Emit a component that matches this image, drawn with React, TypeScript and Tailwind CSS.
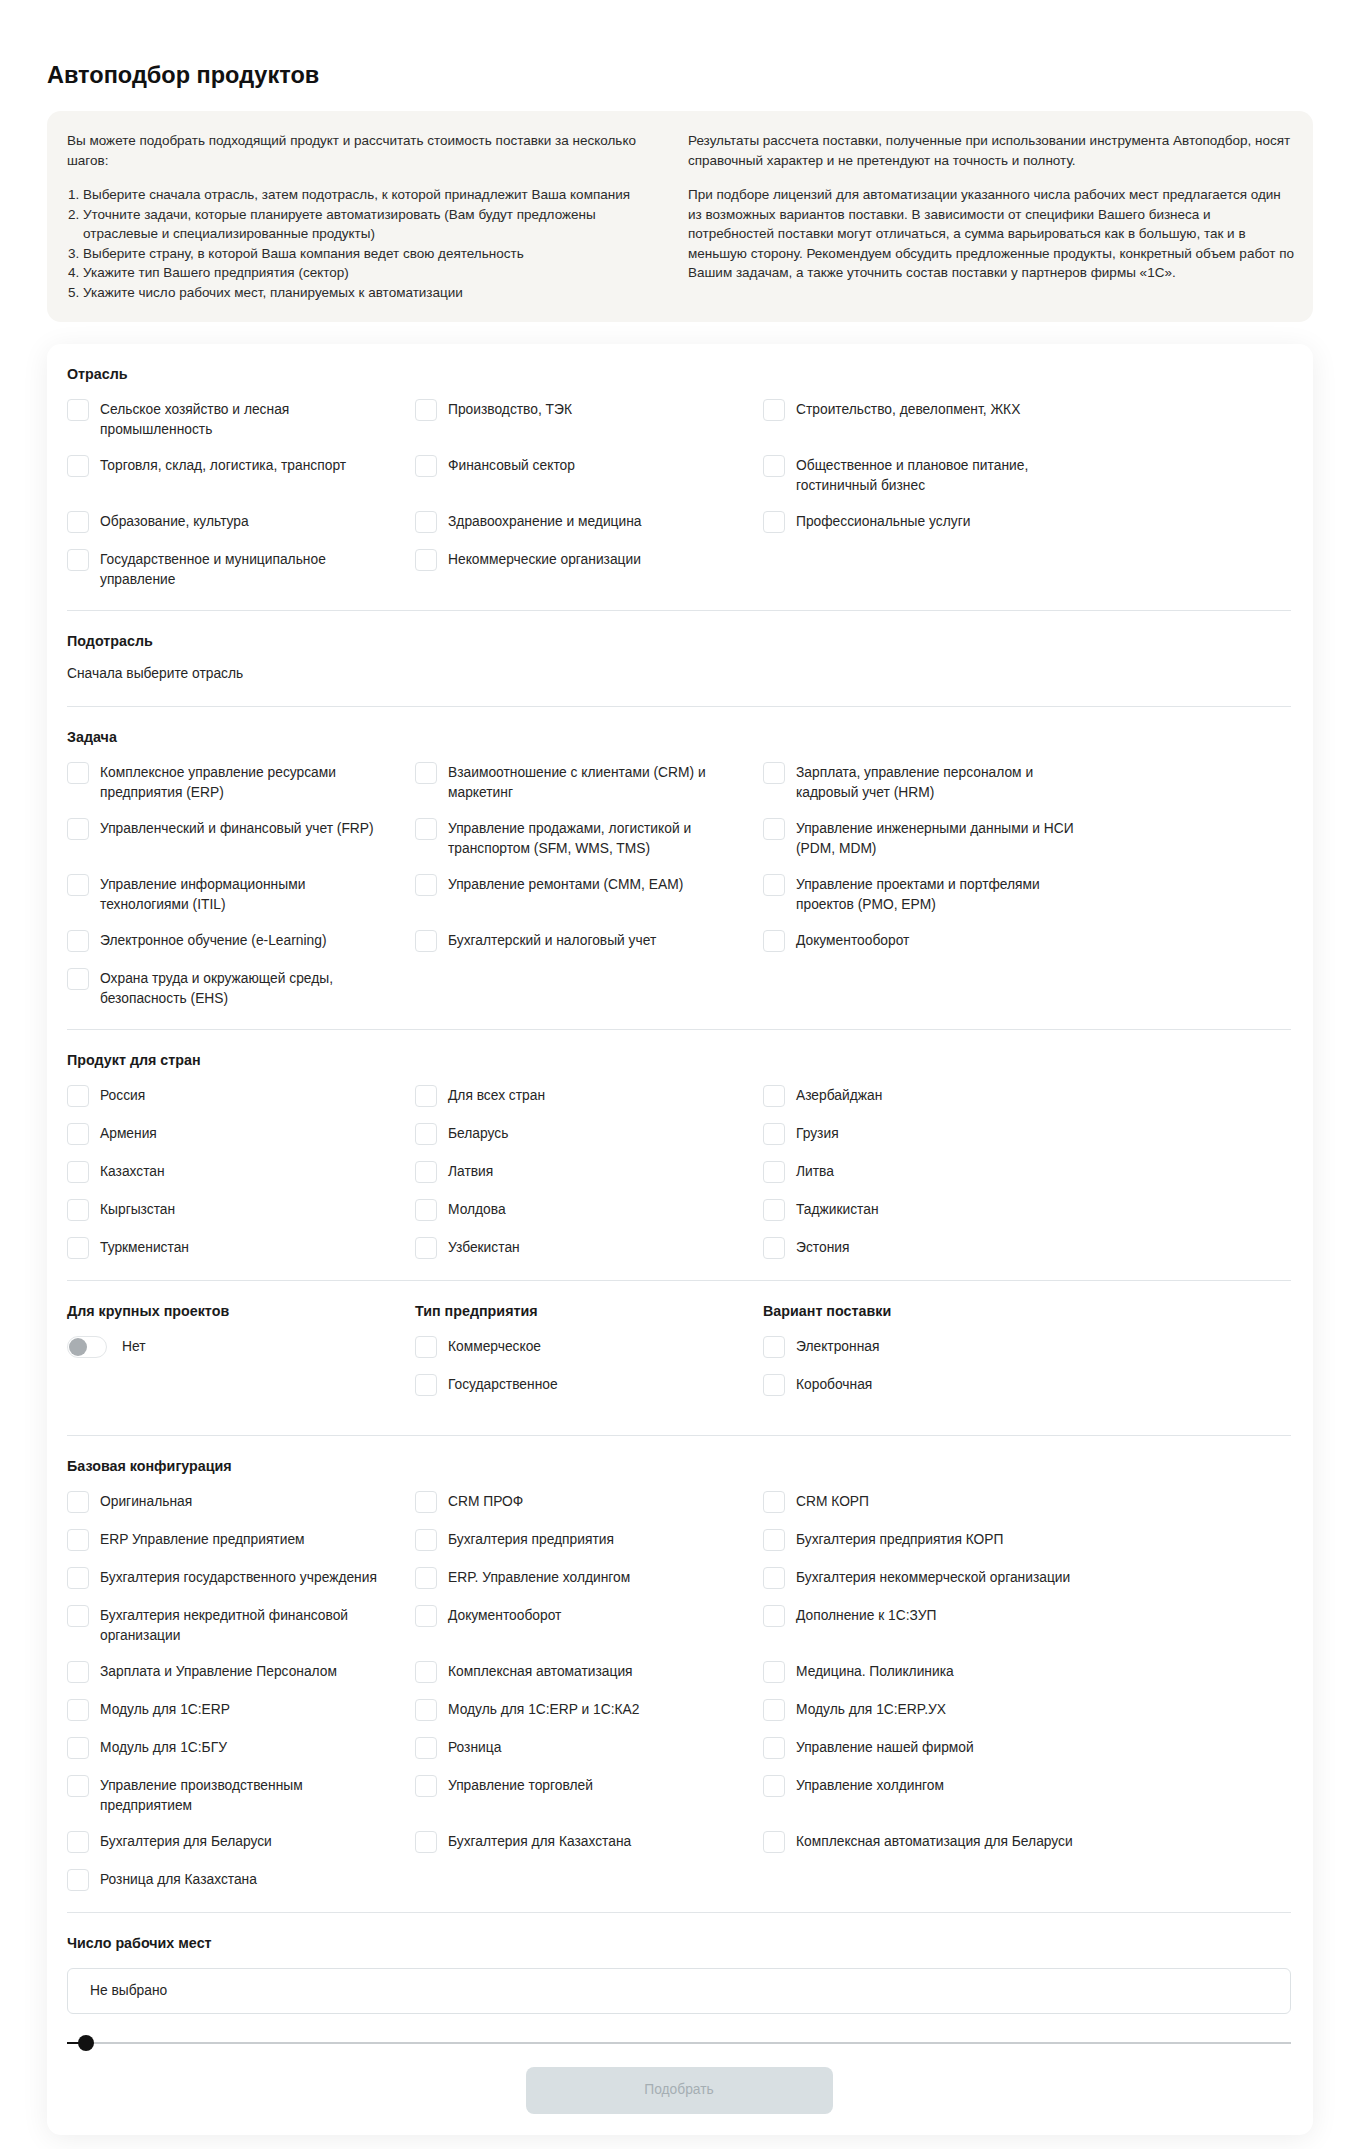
import { useState } from 'react';

const industries = [
  'Сельское хозяйство и лесная\nпромышленность',
  'Производство, ТЭК',
  'Строительство, девелопмент, ЖКХ',
  'Торговля, склад, логистика, транспорт',
  'Финансовый сектор',
  'Общественное и плановое питание,\nгостиничный бизнес',
  'Образование, культура',
  'Здравоохранение и медицина',
  'Профессиональные услуги',
  'Государственное и муниципальное\nуправление',
  'Некоммерческие организации',
];

const tasks = [
  'Комплексное управление ресурсами\nпредприятия (ERP)',
  'Взаимоотношение с клиентами (CRM) и\nмаркетинг',
  'Зарплата, управление персоналом и\nкадровый учет (HRM)',
  'Управленческий и финансовый учет (FRP)',
  'Управление продажами, логистикой и\nтранспортом (SFM, WMS, TMS)',
  'Управление инженерными данными и НСИ\n(PDM, MDM)',
  'Управление информационными\nтехнологиями (ITIL)',
  'Управление ремонтами (CMM, EAM)',
  'Управление проектами и портфелями\nпроектов (PMO, EPM)',
  'Электронное обучение (e-Learning)',
  'Бухгалтерский и налоговый учет',
  'Документооборот',
  'Охрана труда и окружающей среды,\nбезопасность (EHS)',
];

const countries = [
  'Россия', 'Для всех стран', 'Азербайджан',
  'Армения', 'Беларусь', 'Грузия',
  'Казахстан', 'Латвия', 'Литва',
  'Кыргызстан', 'Молдова', 'Таджикистан',
  'Туркменистан', 'Узбекистан', 'Эстония',
];

const configs = [
  'Оригинальная', 'CRM ПРОФ', 'CRM КОРП',
  'ERP Управление предприятием', 'Бухгалтерия предприятия', 'Бухгалтерия предприятия КОРП',
  'Бухгалтерия государственного учреждения', 'ERP. Управление холдингом', 'Бухгалтерия некоммерческой организации',
  'Бухгалтерия некредитной финансовой\nорганизации', 'Документооборот', 'Дополнение к 1С:ЗУП',
  'Зарплата и Управление Персоналом', 'Комплексная автоматизация', 'Медицина. Поликлиника',
  'Модуль для 1С:ERP', 'Модуль для 1С:ERP и 1С:КА2', 'Модуль для 1С:ERP.УХ',
  'Модуль для 1С:БГУ', 'Розница', 'Управление нашей фирмой',
  'Управление производственным\nпредприятием', 'Управление торговлей', 'Управление холдингом',
  'Бухгалтерия для Беларуси', 'Бухгалтерия для Казахстана', 'Комплексная автоматизация для Беларуси',
  'Розница для Казахстана',
];

const steps = [
  'Выберите сначала отрасль, затем подотрасль, к которой принадлежит Ваша компания',
  'Уточните задачи, которые планируете автоматизировать (Вам будут предложены\nотраслевые и специализированные продукты)',
  'Выберите страну, в которой Ваша компания ведет свою деятельность',
  'Укажите тип Вашего предприятия (сектор)',
  'Укажите число рабочих мест, планируемых к автоматизации',
];

const Option = ({ label }: { label: string }) => {
  const [checked, setChecked] = useState(false);
  return (
    <label className="flex items-start gap-[11px] cursor-pointer">
      <span
        onClick={() => setChecked(!checked)}
        className={`w-[22px] h-[22px] shrink-0 rounded-[4px] border ${
          checked ? 'bg-[#1f1f1f] border-[#1f1f1f]' : 'bg-white border-[#dfe3e6]'
        }`}
      />
      <span className="pt-px text-[13.8px] leading-[19.5px] text-[#262626] whitespace-pre-line">{label}</span>
    </label>
  );
};

const OptionGrid = ({ items }: { items: string[] }) => (
  <div className="grid grid-cols-[repeat(3,348px)] gap-y-4">
    {items.map((item) => (
      <Option key={item} label={item} />
    ))}
  </div>
);

const Heading = ({ children }: { children: string }) => (
  <h3 className="text-[14.3px] leading-4 font-bold text-[#1a1a1a] mb-[17px]">{children}</h3>
);

export default function App() {
  const [large, setLarge] = useState(false);

  return (
    <div className="min-h-[2149px] bg-white px-[47px] pt-[61px] pb-[14px] font-['Liberation_Sans',Arial,sans-serif] text-[#262626]">
      <h1 className="text-[23.5px] leading-7 font-bold text-[#111] mb-[22px]">Автоподбор продуктов</h1>

      {/* intro */}
      <div className="grid grid-cols-[601px_1fr] gap-x-5 rounded-[14px] bg-[#f6f5f2] px-5 pt-5 pb-5 text-[13.5px] leading-[19.5px] text-[#2b2b2b] whitespace-nowrap">
        <div>
          <p>
            Вы можете подобрать подходящий продукт и рассчитать стоимость поставки за несколько
            <br />
            шагов:
          </p>
          <ol className="mt-[15px] list-decimal pl-4">
            {steps.map((s) => (
              <li key={s} className="whitespace-pre-line">{s}</li>
            ))}
          </ol>
        </div>
        <div>
          <p>
            Результаты рассчета поставки, полученные при использовании инструмента Автоподбор, носят
            <br />
            справочный характер и не претендуют на точность и полноту.
          </p>
          <p className="mt-[15px]">
            При подборе лицензий для автоматизации указанного числа рабочих мест предлагается один
            <br />
            из возможных вариантов поставки. В зависимости от специфики Вашего бизнеса и
            <br />
            потребностей поставки могут отличаться, а сумма варьироваться как в большую, так и в
            <br />
            меньшую сторону. Рекомендуем обсудить предложенные продукты, конкретный объем работ по
            <br />
            Вашим задачам, а также уточнить состав поставки у партнеров фирмы «1С».
          </p>
        </div>
      </div>

      {/* form */}
      <div className="mt-[22px] rounded-[14px] bg-white pl-5 pr-[22px] pt-[22px] pb-[21px] shadow-[0_4px_28px_rgba(0,0,0,0.07)]">
        <section className="pb-[21px] border-b border-[#e1e5e8]">
          <Heading>Отрасль</Heading>
          <OptionGrid items={industries} />
        </section>

        <section className="pt-[22px] pb-[22px] border-b border-[#e1e5e8]">
          <h3 className="text-[14.3px] leading-4 font-bold text-[#1a1a1a] mb-[15px]">Подотрасль</h3>
          <p className="text-[13.8px] leading-5 text-[#262626]">Сначала выберите отрасль</p>
        </section>

        <section className="pt-[22px] pb-[21px] border-b border-[#e1e5e8]">
          <Heading>Задача</Heading>
          <OptionGrid items={tasks} />
        </section>

        <section className="pt-[22px] pb-[21px] border-b border-[#e1e5e8]">
          <Heading>Продукт для стран</Heading>
          <OptionGrid items={countries} />
        </section>

        <section className="pt-[22px] pb-[39px] border-b border-[#e1e5e8] grid grid-cols-[repeat(3,348px)]">
          <div>
            <Heading>Для крупных проектов</Heading>
            <div className="flex items-center gap-[15px]">
              <button
                onClick={() => setLarge(!large)}
                className={`w-10 h-[22px] rounded-full border border-[#e3e6e8] p-px flex ${
                  large ? 'justify-end bg-[#1f1f1f]' : 'justify-start bg-white'
                }`}
              >
                <span className={`w-[18px] h-[18px] rounded-full ${large ? 'bg-white' : 'bg-[#a9aeb2]'}`} />
              </button>
              <span className="text-[13.8px] leading-5">{large ? 'Да' : 'Нет'}</span>
            </div>
          </div>
          <div>
            <Heading>Тип предприятия</Heading>
            <div className="flex flex-col gap-4">
              <Option label="Коммерческое" />
              <Option label="Государственное" />
            </div>
          </div>
          <div>
            <Heading>Вариант поставки</Heading>
            <div className="flex flex-col gap-4">
              <Option label="Электронная" />
              <Option label="Коробочная" />
            </div>
          </div>
        </section>

        <section className="pt-[22px] pb-[21px] border-b border-[#e1e5e8]">
          <Heading>Базовая конфигурация</Heading>
          <OptionGrid items={configs} />
        </section>

        <section className="pt-[22px]">
          <Heading>Число рабочих мест</Heading>
          <div className="h-[46px] rounded-[6px] border border-[#dde2e5] px-[22px] flex items-center text-[13.8px] text-[#262626]">
            Не выбрано
          </div>
          <div className="relative mt-[21px] h-4 flex items-center">
            <div className="h-[2px] w-full bg-[#c9cdd0]" />
            <div className="absolute left-0 h-[2px] w-[19px] bg-[#111]" />
            <div className="absolute left-[11px] w-4 h-4 rounded-full bg-[#111]" />
          </div>
          <div className="mt-4 flex justify-center">
            <button
              disabled
              className="w-[307px] h-[47px] rounded-[8px] bg-[#d8dfe2] text-[13.8px] text-[#a5aeb3]"
            >
              Подобрать
            </button>
          </div>
        </section>
      </div>
    </div>
  );
}
